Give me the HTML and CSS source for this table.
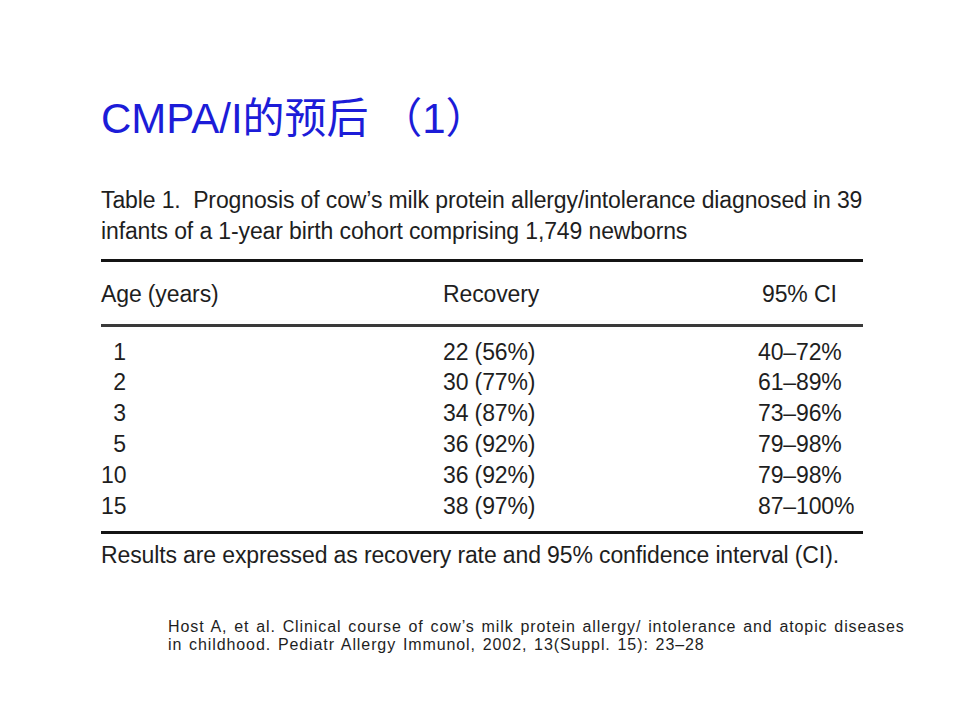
FILE: index.html
```html
<!DOCTYPE html>
<html lang="zh">
<head>
<meta charset="utf-8">
<title>CMPA/I的预后（1）</title>
<link rel="stylesheet" href="styles.css">
</head>
<body>
<main class="slide">
  <h1 class="title">CMPA/I的预后 （1）</h1>
  <p class="caption">Table 1.&nbsp; Prognosis of cow’s milk protein allergy/intolerance diagnosed in 39<br>infants of a 1-year birth cohort comprising 1,749 newborns</p>
  <div class="table">
    <div class="row head">
      <div class="c-age">Age (years)</div>
      <div class="c-rec">Recovery</div>
      <div class="c-ci">95% CI</div>
    </div>
    <div class="body">
      <div class="row"><div class="c-age"><span class="num">1</span></div><div class="c-rec">22 (56%)</div><div class="c-ci">40–72%</div></div>
      <div class="row"><div class="c-age"><span class="num">2</span></div><div class="c-rec">30 (77%)</div><div class="c-ci">61–89%</div></div>
      <div class="row"><div class="c-age"><span class="num">3</span></div><div class="c-rec">34 (87%)</div><div class="c-ci">73–96%</div></div>
      <div class="row"><div class="c-age"><span class="num">5</span></div><div class="c-rec">36 (92%)</div><div class="c-ci">79–98%</div></div>
      <div class="row"><div class="c-age"><span class="num">10</span></div><div class="c-rec">36 (92%)</div><div class="c-ci">79–98%</div></div>
      <div class="row"><div class="c-age"><span class="num">15</span></div><div class="c-rec">38 (97%)</div><div class="c-ci">87–100%</div></div>
    </div>
  </div>
  <p class="note">Results are expressed as recovery rate and 95% confidence interval (CI).</p>
  <p class="ref">Host A, et al. Clinical course of cow’s milk protein allergy/ intolerance and atopic diseases<br>in childhood. Pediatr Allergy Immunol, 2002, 13(Suppl. 15): 23–28</p>
</main>
</body>
</html>
```
FILE: styles.css
```css
html, body {
  margin: 0;
  padding: 0;
  background: #ffffff;
}
.slide {
  width: 960px;
  height: 720px;
  box-sizing: border-box;
  padding: 95px 0 0 101px;
  overflow: hidden;
}
.title {
  margin: 0;
  font-family: "Liberation Sans", "Noto Sans CJK SC", sans-serif;
  font-weight: normal;
  font-size: 42px;
  line-height: 48px;
  color: #1c1cd8;
  white-space: nowrap;
}
.caption,
.table,
.note {
  font-family: "Liberation Sans", sans-serif;
  font-size: 23px;
  color: #1e1e1e;
  letter-spacing: -0.12px;
}
.caption {
  margin: 41.5px 0 0;
  line-height: 31px;
  white-space: nowrap;
}
.table {
  width: 762px;
  margin-top: 12.5px;
  border-top: 3px solid #141414;
  border-bottom: 3px solid #141414;
}
.row {
  display: grid;
  grid-template-columns: 342px 315px 1fr;
  line-height: 30.8px;
}
.row.head {
  line-height: 31px;
  padding: 16.5px 0 14.5px;
  border-bottom: 3px solid #3a3a3a;
}
.head .c-ci {
  padding-left: 4px;
}
.body {
  padding: 9.6px 0 9.4px;
}
.num {
  display: inline-block;
  width: 25px;
  text-align: right;
}
.note {
  margin: 6.5px 0 0;
  line-height: 31px;
  white-space: nowrap;
}
.ref {
  margin: 47px 0 0 67px;
  font-family: "Liberation Sans", sans-serif;
  font-size: 16px;
  line-height: 17.25px;
  letter-spacing: 0.9px;
  word-spacing: 1.5px;
  color: #1e1e1e;
  white-space: nowrap;
}
```
